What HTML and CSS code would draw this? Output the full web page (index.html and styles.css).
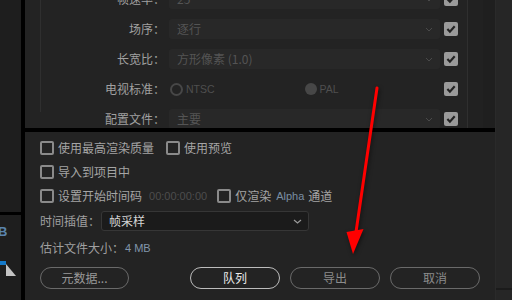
FILE: index.html
```html
<!DOCTYPE html>
<html lang="zh-CN">
<head>
<meta charset="utf-8">
<title>导出设置</title>
<link rel="stylesheet" href="styles.css">
</head>
<body>
<div class="app">
  <div class="lstrip">
    <div class="lstrip-top"></div>
    <div class="lstrip-sep"></div>
    <div class="lstrip-bot">
      <span class="mb">B</span>
      <div class="meter"><span class="meter-bar"></span><span class="meter-tri"></span></div>
    </div>
  </div>
  <div class="vsep"></div>
  <div class="main">
    <div class="top">
      <div class="form">
        <div class="form-inner">
          <div class="rows">
            <div class="frow">
              <span class="lbl">帧速率：</span>
              <div class="dd"><span>25</span><svg class="chev" width="8" height="5" viewBox="0 0 8 5"><path d="M1 1 L4 4 L7 1" fill="none" stroke="#4a4a4a" stroke-width="1"/></svg></div>
              <span class="cbx"><svg width="14" height="14" viewBox="0 0 14 14"><path d="M3.4 7.1 L5.9 9.7 L10.7 4.3" fill="none" stroke="#222" stroke-width="2.2"/></svg></span>
            </div>
            <div class="frow">
              <span class="lbl">场序：</span>
              <div class="dd"><span>逐行</span><svg class="chev" width="8" height="5" viewBox="0 0 8 5"><path d="M1 1 L4 4 L7 1" fill="none" stroke="#4a4a4a" stroke-width="1"/></svg></div>
              <span class="cbx"><svg width="14" height="14" viewBox="0 0 14 14"><path d="M3.4 7.1 L5.9 9.7 L10.7 4.3" fill="none" stroke="#222" stroke-width="2.2"/></svg></span>
            </div>
            <div class="frow">
              <span class="lbl">长宽比：</span>
              <div class="dd"><span>方形像素 (1.0)</span><svg class="chev" width="8" height="5" viewBox="0 0 8 5"><path d="M1 1 L4 4 L7 1" fill="none" stroke="#4a4a4a" stroke-width="1"/></svg></div>
              <span class="cbx"><svg width="14" height="14" viewBox="0 0 14 14"><path d="M3.4 7.1 L5.9 9.7 L10.7 4.3" fill="none" stroke="#222" stroke-width="2.2"/></svg></span>
            </div>
            <div class="frow">
              <span class="lbl">电视标准：</span>
              <div class="radios">
                <span class="radio"><span class="ring"></span>NTSC</span>
                <span class="radio"><span class="dot"></span>PAL</span>
              </div>
              <span class="cbx"><svg width="14" height="14" viewBox="0 0 14 14"><path d="M3.4 7.1 L5.9 9.7 L10.7 4.3" fill="none" stroke="#222" stroke-width="2.2"/></svg></span>
            </div>
            <div class="frow">
              <span class="lbl">配置文件：</span>
              <div class="dd"><span>主要</span><svg class="chev" width="8" height="5" viewBox="0 0 8 5"><path d="M1 1 L4 4 L7 1" fill="none" stroke="#4a4a4a" stroke-width="1"/></svg></div>
              <span class="cbx"><svg width="14" height="14" viewBox="0 0 14 14"><path d="M3.4 7.1 L5.9 9.7 L10.7 4.3" fill="none" stroke="#222" stroke-width="2.2"/></svg></span>
            </div>
          </div>
        </div>
      </div>
      <div class="scroll"></div>
      <div class="col2"></div>
    </div>
    <div class="hsep"></div>
    <div class="bottom">
      <div class="brow">
        <span class="chk"><span class="box"></span>使用最高渲染质量</span>
        <span class="chk chk-b"><span class="box"></span>使用预览</span>
      </div>
      <div class="brow">
        <span class="chk"><span class="box"></span>导入到项目中</span>
      </div>
      <div class="brow">
        <span class="chk"><span class="box"></span>设置开始时间码</span>
        <span class="tc">00:00:00:00</span>
        <span class="chk chk-c"><span class="box"></span>仅渲染<span class="alpha">Alpha</span>通道</span>
      </div>
      <div class="brow r4">
        <span class="lbl2">时间插值：</span>
        <div class="dd2"><span>帧采样</span><svg class="chev" width="9" height="5" viewBox="0 0 9 5"><path d="M1 1 L4.5 4 L8 1" fill="none" stroke="#9a9a9a" stroke-width="1.2"/></svg></div>
      </div>
      <div class="brow r5">
        <span class="lbl2">估计文件大小：</span><span class="size">4 MB</span>
      </div>
      <div class="btns">
        <span class="btn">元数据...</span>
        <span class="btn primary">队列</span>
        <span class="btn">导出</span>
        <span class="btn">取消</span>
      </div>
    </div>
  </div>
  <div class="rstrip">
    <div class="rstrip-top"></div>
    <div class="rstrip-line"></div>
  </div>
</div>
<svg class="arrow" width="512" height="300" viewBox="0 0 512 300">
  <g class="arrow-g">
    <line x1="377" y1="88" x2="356" y2="232" stroke="#ff0000" stroke-width="3" stroke-linecap="round"/>
    <polygon points="346.5,232 363.5,229 353,254" fill="#ff0000"/>
  </g>
</svg>
</body>
</html>
```
FILE: styles.css
```css
* { box-sizing: border-box; margin: 0; padding: 0; }
html, body { width: 512px; height: 300px; overflow: hidden; background: #1f1f1f; }
body {
  font-family: "Noto Sans CJK SC", "Noto Sans", sans-serif;
  font-size: 12px;
  line-height: 16px;
  color: #a3a3a3;
  position: relative;
}
.app { display: flex; width: 512px; height: 300px; }

/* left strip */
.lstrip { width: 21px; display: flex; flex-direction: column; background: #1e1e1e; overflow: hidden; }
.lstrip-top { height: 212px; }
.lstrip-sep { height: 3px; background: #000; }
.lstrip-bot { flex: 1; display: flex; flex-direction: column; padding-top: 10px; }
.mb { font-family: "Liberation Sans", sans-serif; font-weight: bold; font-size: 13px; line-height: 14px; color: #5a84ad; margin-left: -2px; }
.meter { display: flex; align-items: flex-start; margin-top: 22px; }
.meter-bar { width: 6px; height: 4px; background: #1479c9; }
.meter-tri { width: 10px; height: 12px; margin-top: 3px; background: #c4c4c4; clip-path: polygon(0 0, 0 100%, 100% 100%); }

.vsep { width: 4px; background: #000; }

/* main */
.main { width: 470px; display: flex; flex-direction: column; }
.top { height: 128px; display: flex; background: #232323; overflow: hidden; }
.form { width: 442px; padding-left: 15px; }
.form-inner { height: 100%; border-left: 1px solid #2f2f2f; }
.rows { margin-top: -16px; }
.frow {
  display: grid;
  grid-template-columns: 124px 271px 14px;
  column-gap: 4px;
  height: 30px;
  align-items: center;
}
.lbl { text-align: right; white-space: nowrap; color: #a0a0a0; }
.dd {
  height: 20px;
  background: #282828;
  border-radius: 3px;
  display: flex;
  align-items: center;
  justify-content: space-between;
  padding: 0 7px 0 8px;
  color: #545454;
  white-space: nowrap;
}
.cbx { width: 14px; height: 14px; background: #9a9a9a; border-radius: 2px; display: block; }
.cbx svg { display: block; }
.radios { display: grid; grid-template-columns: 1fr 1fr; align-items: center; }
.radio {
  display: flex; align-items: center; gap: 3px;
  font-family: "Liberation Sans", sans-serif; font-size: 10.5px; color: #4f4f4f;
}
.radio:first-child { margin-left: 1px; }
.ring { width: 13px; height: 13px; border: 2px solid #474747; border-radius: 50%; }
.dot { width: 12px; height: 12px; background: #474747; border-radius: 50%; }

.scroll { width: 16px; border-left: 1px solid #2f2f2f; background: #212121; }
.col2 { width: 12px; background: #1f1f1f; }

.hsep { height: 4px; background: #000; }

.bottom {
  flex: 1;
  background: #232323;
  padding: 4px 15px 0;
  display: flex;
  flex-direction: column;
}
.brow { height: 24px; display: flex; align-items: center; white-space: nowrap; }
.chk { display: flex; align-items: center; gap: 4px; color: #a5a5a5; }
.box { width: 14px; height: 14px; border: 2px solid #8a8a8a; border-radius: 2px; }
.chk-b { margin-left: 12px; }
.chk-c { margin-left: 10px; }
.tc { font-family: "Liberation Sans", sans-serif; font-size: 11px; color: #4d4d4d; margin-left: 7px; }
.alpha { font-family: "Liberation Sans", sans-serif; font-size: 11px; color: #7a8ea2; margin-left: 1px; }

.r4 { height: 26px; }
.lbl2 { color: #a0a0a0; }
.dd2 {
  width: 208px;
  height: 20px;
  margin-left: 1px;
  background: #1b1b1b;
  border: 1px solid #363636;
  border-radius: 3px;
  display: flex;
  align-items: center;
  justify-content: space-between;
  padding: 0 6px 0 7px;
  color: #d6d6d6;
}
.r5 { height: 28px; }
.size { font-family: "Liberation Sans", sans-serif; font-size: 11px; color: #8196ab; margin-left: 1px; }

.btns { display: flex; gap: 10px; margin-top: 5px; }
.btn {
  width: 90px;
  height: 22px;
  border: 1px solid #6a6a6a;
  border-radius: 11px;
  display: flex;
  align-items: center;
  justify-content: center;
  color: #8c8c8c;
}
.btn:first-child { width: 89px; color: #999; }
.btn.primary { margin-left: auto; border-color: #bcbcbc; color: #ececec; }

/* right strip */
.rstrip { width: 17px; display: flex; flex-direction: column; background: #262626; border-left: 1px solid #2a2a2a; }
.rstrip-top { height: 288px; }
.rstrip-line { height: 2px; background: #1b1b1b; }

.arrow { position: absolute; top: 0; left: 0; pointer-events: none; }
.arrow-g { filter: drop-shadow(1px 2px 2px rgba(0,0,0,0.5)); }
```
